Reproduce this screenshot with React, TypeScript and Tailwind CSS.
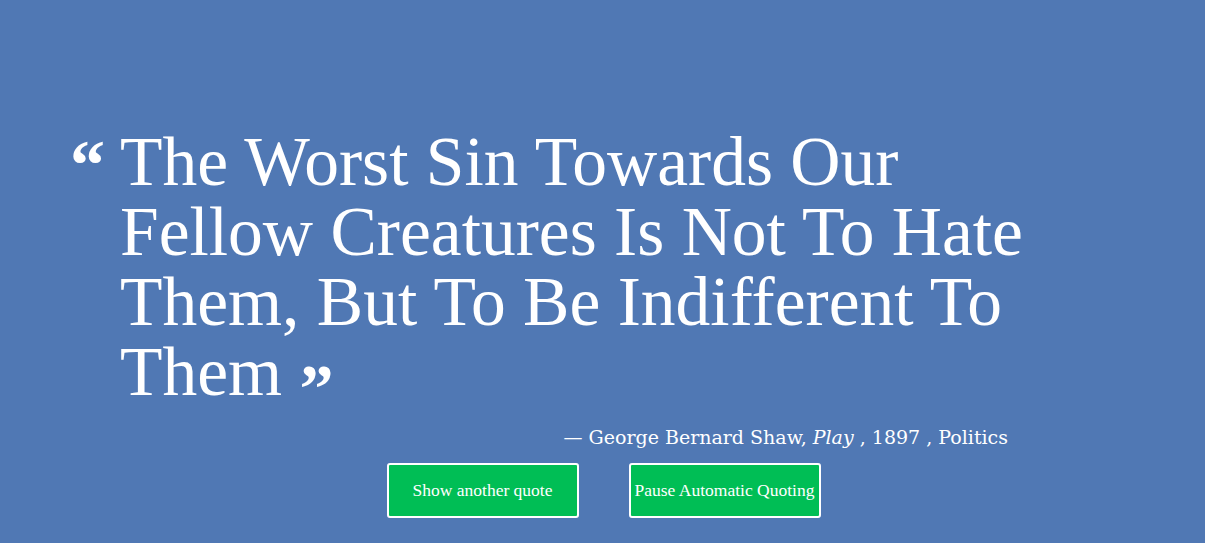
export default function App() {
  return (
    <div
      className="min-h-[543px] w-full bg-[#5078b4] text-white overflow-hidden"
      style={{ fontFamily: '"Liberation Serif", "DejaVu Serif", serif' }}
    >
      <div className="pt-[127px] pl-[120px]">
        <blockquote className="relative w-[950px] text-[69.5px] leading-[70px]">
          <span className="absolute left-[-50px] top-[3px] text-[70px] leading-[70px] font-bold">“</span>
          The Worst Sin Towards Our Fellow Creatures Is Not To Hate Them, But To Be Indifferent To Them{" "}
          <span className="text-[68px] leading-[0px] font-bold align-[-16px]">”</span>
        </blockquote>
      </div>

      <div
        className="flex justify-end pr-[197px] mt-[16px] text-[19px] leading-[28px]"
        style={{ fontFamily: '"DejaVu Serif", "Liberation Serif", serif' }}
      >
        <p>
          — George Bernard Shaw, <em>Play</em> , 1897 , Politics
        </p>
      </div>

      <div className="flex justify-center gap-[50px] mt-[12px] pl-[2px]">
        <button className="w-[192px] h-[55px] bg-[#00be55] border-2 border-white rounded-[3px] text-[17.5px]">
          Show another quote
        </button>
        <button className="w-[192px] h-[55px] bg-[#00be55] border-2 border-white rounded-[3px] text-[17.5px] whitespace-nowrap">
          Pause Automatic Quoting
        </button>
      </div>
    </div>
  );
}
